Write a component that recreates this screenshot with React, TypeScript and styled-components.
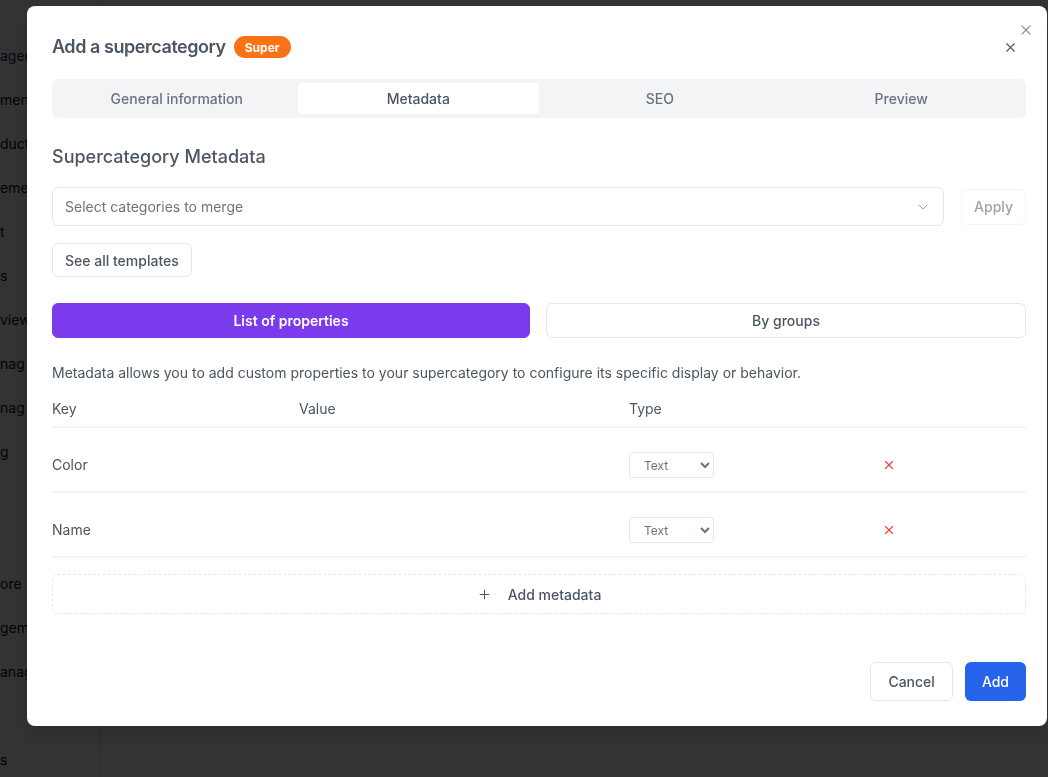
import React from "react";
import styled, { createGlobalStyle } from "styled-components";
import { X, ChevronDown, Plus } from "lucide-react";

const GlobalStyle = createGlobalStyle`
  * { box-sizing: border-box; }
  html, body { margin: 0; padding: 0; }
  body {
    font-family: Inter, "Noto Sans", Arial, sans-serif;
    background: #ffffff;
    width: 1048px;
    height: 777px;
    overflow: hidden;
  }
`;

const Page = styled.div`
  display: flex;
  width: 1048px;
  height: 777px;
  background: #ffffff;
`;

const Sidebar = styled.nav`
  width: 101px;
  flex: none;
  border-right: 1px solid #e5e7eb;
  padding-top: 46px;
  display: flex;
  flex-direction: column;
  overflow: hidden;
`;

const NavItem = styled.div<{ $active?: boolean }>`
  flex: none;
  height: 44px;
  font-size: 14px;
  line-height: 20px;
  white-space: nowrap;
  color: ${(p) => (p.$active ? "#3b1f6e" : "#111111")};
`;

const Main = styled.main`
  flex: 1;
`;

const Overlay = styled.div`
  position: fixed;
  inset: 0;
  background: rgba(0, 0, 0, 0.8);
  display: flex;
  align-items: flex-start;
  padding: 6px 0 0 27px;
`;

const Modal = styled.div`
  position: relative;
  width: 1020px;
  flex: none;
  background: #ffffff;
  border-radius: 8px;
  padding: 24px 21px 25px 25px;
  display: flex;
  flex-direction: column;
  box-shadow: 0 10px 25px rgba(0, 0, 0, 0.15);
`;

const CornerClose = styled.button`
  position: absolute;
  top: 16px;
  right: 13px;
  width: 16px;
  height: 16px;
  padding: 0;
  border: none;
  background: transparent;
  color: #8b929c;
  display: flex;
  align-items: center;
  justify-content: center;
`;

const Header = styled.div`
  display: flex;
  align-items: center;
  height: 34px;
  margin-bottom: 15px;
`;

const Title = styled.h2`
  margin: 0;
  font-size: 18px;
  line-height: 28px;
  font-weight: 600;
  color: #4b5563;
  letter-spacing: -0.45px;
`;

const Badge = styled.span`
  margin-left: 8px;
  height: 22px;
  padding: 0 11px;
  border-radius: 999px;
  background: #f97316;
  color: #ffffff;
  font-size: 12px;
  font-weight: 700;
  display: inline-flex;
  align-items: center;
`;

const HeaderClose = styled.button`
  margin-left: auto;
  width: 32px;
  height: 32px;
  padding: 0;
  border: none;
  background: transparent;
  color: #4b5563;
  display: flex;
  align-items: center;
  justify-content: center;
`;

const TabBar = styled.div`
  display: grid;
  grid-template-columns: repeat(4, 1fr);
  height: 39px;
  padding: 4px;
  background: #f3f4f6;
  border-radius: 6px;
`;

const Tab = styled.div<{ $active?: boolean }>`
  display: flex;
  align-items: center;
  justify-content: center;
  border-radius: 4px;
  font-size: 14px;
  font-weight: 500;
  color: ${(p) => (p.$active ? "#4b5563" : "#6b7280")};
  background: ${(p) => (p.$active ? "#ffffff" : "transparent")};
`;

const SectionTitle = styled.h3`
  margin: 25px 0 16px;
  font-size: 18px;
  line-height: 28px;
  font-weight: 500;
  color: #4b5563;
`;

const MergeRow = styled.div`
  display: flex;
  align-items: center;
  gap: 17px;
`;

const FakeSelect = styled.div`
  flex: 1;
  height: 39px;
  border: 1px solid #e5e7eb;
  border-radius: 6px;
  padding: 0 12px;
  display: flex;
  align-items: center;
  justify-content: space-between;
  font-size: 14px;
  color: #6b7280;
`;

const OutlineButton = styled.button<{ $disabled?: boolean; $h?: number; $px?: number }>`
  height: ${(p) => p.$h ?? 34}px;
  padding: 0 ${(p) => p.$px ?? 12}px;
  border: 1px solid ${(p) => (p.$disabled ? "#f3f4f6" : "#e5e7eb")};
  border-radius: 6px;
  background: #ffffff;
  font-family: inherit;
  font-size: 14px;
  font-weight: 500;
  color: ${(p) => (p.$disabled ? "#9ca3af" : "#4b5563")};
  display: inline-flex;
  align-items: center;
  justify-content: center;
`;

const TemplatesRow = styled.div`
  margin-top: 17px;
  display: flex;
`;

const ModeToggle = styled.div`
  margin-top: 26px;
  display: grid;
  grid-template-columns: 478px 1fr;
  gap: 16px;
`;

const ModeButton = styled.button<{ $active?: boolean }>`
  height: 35px;
  border-radius: 6px;
  font-family: inherit;
  font-size: 14px;
  font-weight: ${(p) => (p.$active ? 600 : 500)};
  border: 1px solid ${(p) => (p.$active ? "#7c3aed" : "#e5e7eb")};
  background: ${(p) => (p.$active ? "#7c3aed" : "#ffffff")};
  color: ${(p) => (p.$active ? "#ffffff" : "#4b5563")};
`;

const Description = styled.p`
  margin: 25px 0 8px;
  font-size: 14px;
  line-height: 20px;
  color: #4b5563;
`;

const TableRow = styled.div<{ $header?: boolean }>`
  display: grid;
  grid-template-columns: 247px 330px 252px 1fr;
  align-items: center;
  border-bottom: 2px solid #f3f4f6;
  padding: ${(p) => (p.$header ? "8px 0 7px" : "24px 0 13px")};
  font-size: 14px;
  line-height: 20px;
  color: #4b5563;
`;

const TypeSelect = styled.select`
  width: 85px;
  height: 26px;
  border: 1px solid #e5e7eb;
  border-radius: 4px;
  background: #ffffff;
  font-family: inherit;
  font-size: 12px;
  color: #6b7280;
  padding: 0 0 0 10px;
`;

const RemoveButton = styled.button`
  width: 16px;
  height: 16px;
  padding: 0;
  border: none;
  background: transparent;
  color: #ef4444;
  display: flex;
  align-items: center;
  justify-content: center;
`;

const AddMeta = styled.button`
  margin-top: 16px;
  height: 40px;
  border: 1px dashed #e5e7eb;
  border-radius: 6px;
  background: #ffffff;
  font-family: inherit;
  font-size: 14px;
  font-weight: 500;
  color: #4b5563;
  display: flex;
  align-items: center;
  justify-content: center;
  gap: 16px;
`;

const Footer = styled.div`
  margin-top: 48px;
  display: flex;
  justify-content: flex-end;
  gap: 12px;
`;

const PrimaryButton = styled.button`
  height: 39px;
  padding: 0 17px;
  border: none;
  border-radius: 6px;
  background: #2563eb;
  color: #ffffff;
  font-family: inherit;
  font-size: 14px;
  font-weight: 500;
`;

const navItems: { label: string; active?: boolean }[] = [
  { label: "agem", active: true },
  { label: "ment" },
  { label: "duct" },
  { label: "eme" },
  { label: "t" },
  { label: "s" },
  { label: "view" },
  { label: "nag" },
  { label: "nag" },
  { label: "g" },
  { label: "" },
  { label: "" },
  { label: "ore" },
  { label: "gem" },
  { label: "anag" },
  { label: "" },
  { label: "s" },
];

const rows = ["Color", "Name"];

export default function App() {
  return (
    <>
      <GlobalStyle />
      <Page>
        <Sidebar>
          {navItems.map((n, i) => (
            <NavItem key={i} $active={n.active}>
              {n.label}
            </NavItem>
          ))}
        </Sidebar>
        <Main />
      </Page>
      <Overlay>
        <Modal>
          <CornerClose aria-label="Close">
            <X size={16} strokeWidth={1.7} />
          </CornerClose>
          <Header>
            <Title>Add a supercategory</Title>
            <Badge>Super</Badge>
            <HeaderClose aria-label="Close">
              <X size={15} strokeWidth={1.8} />
            </HeaderClose>
          </Header>
          <TabBar>
            <Tab>General information</Tab>
            <Tab $active>Metadata</Tab>
            <Tab>SEO</Tab>
            <Tab>Preview</Tab>
          </TabBar>
          <SectionTitle>Supercategory Metadata</SectionTitle>
          <MergeRow>
            <FakeSelect>
              <span>Select categories to merge</span>
              <ChevronDown size={16} color="#9ca3af" strokeWidth={1.5} />
            </FakeSelect>
            <OutlineButton $disabled $h={36}>Apply</OutlineButton>
          </MergeRow>
          <TemplatesRow>
            <OutlineButton>See all templates</OutlineButton>
          </TemplatesRow>
          <ModeToggle>
            <ModeButton $active>List of properties</ModeButton>
            <ModeButton>By groups</ModeButton>
          </ModeToggle>
          <Description>
            Metadata allows you to add custom properties to your supercategory to configure its specific display or behavior.
          </Description>
          <TableRow $header>
            <span>Key</span>
            <span>Value</span>
            <span>Type</span>
            <span />
          </TableRow>
          {rows.map((r) => (
            <TableRow key={r}>
              <span>{r}</span>
              <span />
              <span>
                <TypeSelect defaultValue="text">
                  <option value="text">Text</option>
                  <option value="number">Number</option>
                </TypeSelect>
              </span>
              <RemoveButton aria-label="Remove">
                <X size={14} strokeWidth={2} />
              </RemoveButton>
            </TableRow>
          ))}
          <AddMeta>
            <Plus size={15} strokeWidth={1.6} />
            <span>Add metadata</span>
          </AddMeta>
          <Footer>
            <OutlineButton $h={39} $px={17}>Cancel</OutlineButton>
            <PrimaryButton>Add</PrimaryButton>
          </Footer>
        </Modal>
      </Overlay>
    </>
  );
}
